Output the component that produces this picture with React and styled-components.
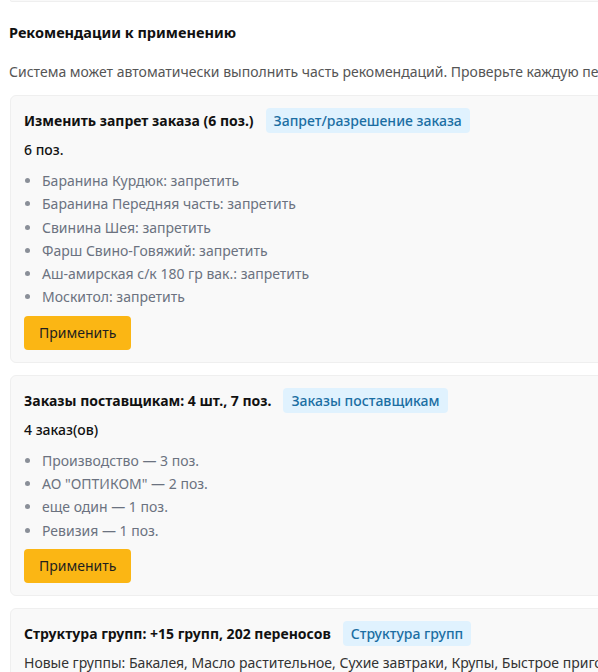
import React from 'react'
import styled, { createGlobalStyle } from 'styled-components'

const GlobalStyle = createGlobalStyle`
  html, body {
    margin: 0;
    padding: 0;
    background: #fff;
    overflow: hidden;
  }
  body {
    font-family: "Noto Sans", "Open Sans", Arial, sans-serif;
    font-size: 14px;
    color: #1a1a1a;
  }
`

const recommendations = [
  {
    title: 'Изменить запрет заказа (6 поз.)',
    tag: 'Запрет/разрешение заказа',
    summary: '6 поз.',
    items: [
      'Баранина Курдюк: запретить',
      'Баранина Передняя часть: запретить',
      'Свинина Шея: запретить',
      'Фарш Свино-Говяжий: запретить',
      'Аш-амирская с/к 180 гр вак.: запретить',
      'Москитол: запретить',
    ],
    action: true,
  },
  {
    title: 'Заказы поставщикам: 4 шт., 7 поз.',
    tag: 'Заказы поставщикам',
    summary: '4 заказ(ов)',
    items: [
      'Производство — 3 поз.',
      'АО "ОПТИКОМ" — 2 поз.',
      'еще один — 1 поз.',
      'Ревизия — 1 поз.',
    ],
    action: true,
  },
  {
    title: 'Структура групп: +15 групп, 202 переносов',
    tag: 'Структура групп',
    text: 'Новые группы: Бакалея, Масло растительное, Сухие завтраки, Крупы, Быстрое приготовление, Консервы',
  },
]

const Page = () => {
  return (
    <>
      <GlobalStyle />
      <Wrapper>
        <PrevCard />
        <Heading>Рекомендации к применению</Heading>
        <Lead>
          Система может автоматически выполнить часть рекомендаций. Проверьте каждую перед применением.
        </Lead>
        <CardList>
          {recommendations.map((rec, index) => (
            <Card key={index}>
              <TitleRow>
                <Title>{rec.title}</Title>
                <Tag>{rec.tag}</Tag>
              </TitleRow>
              {rec.summary && <Summary>{rec.summary}</Summary>}
              {rec.items && (
                <Items>
                  {rec.items.map((item, i) => (
                    <li key={i}>{item}</li>
                  ))}
                </Items>
              )}
              {rec.text && <Note>{rec.text}</Note>}
              {rec.action && <ApplyButton>Применить</ApplyButton>}
            </Card>
          ))}
        </CardList>
      </Wrapper>
    </>
  )
}

export default Page

const Wrapper = styled.div`
  width: 820px;
  padding: 0 10px;
`

const PrevCard = styled.div`
  height: 1px;
  background: #f9f9f9;
  border: 1px solid #efefef;
  border-top: none;
  border-radius: 0 0 6px 6px;
`

const Heading = styled.h2`
  margin: 20px 0 0 -1px;
  font-size: 14.5px;
  font-weight: 700;
  line-height: 20px;
  color: #111;
`

const Lead = styled.p`
  margin: 20px 0 0 -1px;
  line-height: 20px;
  color: #555;
  white-space: nowrap;
`

const CardList = styled.div`
  display: flex;
  flex-direction: column;
  gap: 12px;
  margin-top: 13px;
`

const Card = styled.div`
  background: #f9f9f9;
  border: 1px solid #efefef;
  border-radius: 6px;
  padding: 12px 13px;
`

const TitleRow = styled.div`
  display: flex;
  align-items: center;
  gap: 12px;
  height: 25px;
`

const Title = styled.div`
  font-weight: 700;
  color: #111;
`

const Tag = styled.span`
  background: #e0f2fe;
  color: #1b6ea3;
  border-radius: 4px;
  padding: 0 8px;
  line-height: 25px;
  font-weight: 500;
`

const Summary = styled.div`
  margin-top: 7px;
  line-height: 20px;
  font-weight: 500;
  color: #111;
`

const Items = styled.ul`
  margin: 9px 0 0;
  padding-left: 18px;
  color: #6b7280;

  li {
    line-height: 23.3px;
  }

  li::marker {
    color: #8a8f98;
  }
`

const Note = styled.div`
  margin-top: 7px;
  line-height: 20px;
  color: #333;
  white-space: nowrap;
`

const ApplyButton = styled.button`
  display: block;
  margin-top: 7px;
  height: 34px;
  padding: 0 15px;
  border: none;
  border-radius: 4px;
  background: #fbb614;
  color: #1f1f1f;
  font-family: inherit;
  font-size: 14px;
  cursor: pointer;
`
